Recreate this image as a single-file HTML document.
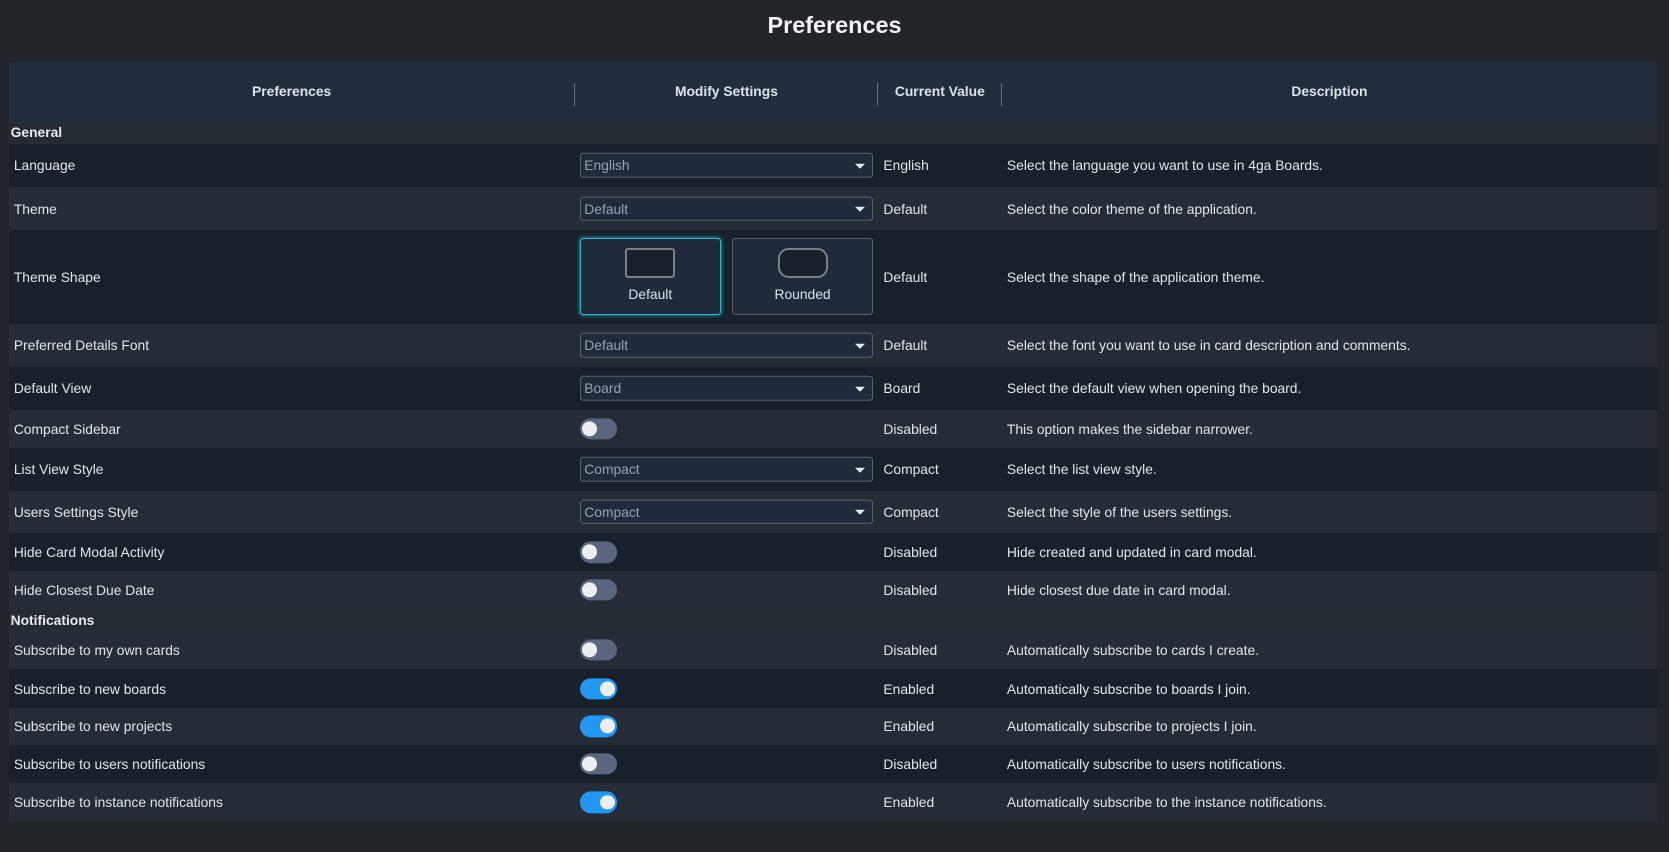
<!DOCTYPE html>
<html><head><meta charset="utf-8"><style>
*{box-sizing:border-box;margin:0;padding:0}
html,body{width:1669px;height:852px;background:#22252a;overflow:hidden}
#w{zoom:1.0644;width:1568px;height:800px;position:relative;font-family:"Liberation Sans",sans-serif;color:#e3e6ea;font-size:13px}
h1{position:absolute;top:11px;left:0;width:1568px;text-align:center;font-size:22px;font-weight:bold;color:#f2f3f5}
.t{position:absolute;left:8px;top:58px;width:1549px}
.hd{height:56px;background:#1f2d3d;position:relative;font-weight:bold;color:#dfe3e8}
.hd div{position:absolute;top:0;height:56px;line-height:56px;text-align:center}
.hd i{position:absolute;top:20px;width:1px;height:22px;background:#6a727c}
.r{position:relative;width:100%}
.d{background:#18202a}.l{background:#252c36}
.sec{height:21px;background:#252b33;font-weight:bold;line-height:21px;padding-left:2px;color:#e8eaee}
.r span{position:absolute;top:50%;transform:translateY(-50%);white-space:nowrap}
.a{left:5px}.c{left:822px}.e{left:938px}
.sel{position:absolute;left:537px;top:50%;transform:translateY(-50%);width:275px;height:23px;border:1px solid #5a616b;border-radius:3px;background:#1f2b3a;color:#9aa2ac;padding-left:3px;line-height:21px}
.sel:after{content:"";position:absolute;right:6px;top:9px;border-left:5px solid transparent;border-right:5px solid transparent;border-top:5px solid #e6e8eb}
.tg{position:absolute;left:537px;top:50%;transform:translateY(-50%);width:35px;height:20px;border-radius:10px;background:#5a6680}
.tg:after{content:"";position:absolute;left:2px;top:3px;width:14px;height:14px;border-radius:50%;background:#eceef0}
.tg.on{background:#2196f3}.tg.on:after{left:19px}
.box{position:absolute;top:8px;width:132px;height:72px;border:1px solid #5a616b;border-radius:3px;background:#1f2b3a;text-align:center}
.box b{display:block;width:47px;height:28px;margin:8px auto 0;border:2px solid #7b7e83;background:#18202a;border-radius:3px}
.box p{margin-top:8px;color:#dde0e4;font-size:13px}
</style></head><body><div id="w">
<h1>Preferences</h1>
<div class="t">
<div class="hd"><div style="left:0;width:532px">Preferences</div><i style="left:531px"></i><div style="left:532px;width:285px">Modify Settings</div><i style="left:816px"></i><div style="left:817px;width:116px">Current Value</div><i style="left:932px"></i><div style="left:933px;width:616px">Description</div></div>
<div class="r sec">General</div>
<div class="r d" style="height:41px"><span class="a">Language</span><div class="sel">English</div><span class="c">English</span><span class="e">Select the language you want to use in 4ga Boards.</span></div>
<div class="r l" style="height:40px"><span class="a">Theme</span><div class="sel">Default</div><span class="c">Default</span><span class="e">Select the color theme of the application.</span></div>
<div class="r d" style="height:88px"><span class="a">Theme Shape</span>
<div class="box" style="left:537px;border-color:#2ab8d0;box-shadow:0 0 4px #2ab8d0"><b></b><p>Default</p></div>
<div class="box" style="left:680px"><b style="border-radius:10px"></b><p>Rounded</p></div>
<span class="c">Default</span><span class="e">Select the shape of the application theme.</span></div>
<div class="r l" style="height:41px"><span class="a">Preferred Details Font</span><div class="sel">Default</div><span class="c">Default</span><span class="e">Select the font you want to use in card description and comments.</span></div>
<div class="r d" style="height:40px"><span class="a">Default View</span><div class="sel">Board</div><span class="c">Board</span><span class="e">Select the default view when opening the board.</span></div>
<div class="r l" style="height:36px"><span class="a">Compact Sidebar</span><div class="tg"></div><span class="c">Disabled</span><span class="e">This option makes the sidebar narrower.</span></div>
<div class="r d" style="height:40px"><span class="a">List View Style</span><div class="sel">Compact</div><span class="c">Compact</span><span class="e">Select the list view style.</span></div>
<div class="r l" style="height:40px"><span class="a">Users Settings Style</span><div class="sel">Compact</div><span class="c">Compact</span><span class="e">Select the style of the users settings.</span></div>
<div class="r d" style="height:36px"><span class="a">Hide Card Modal Activity</span><div class="tg"></div><span class="c">Disabled</span><span class="e">Hide created and updated in card modal.</span></div>
<div class="r l" style="height:35px"><span class="a">Hide Closest Due Date</span><div class="tg"></div><span class="c">Disabled</span><span class="e">Hide closest due date in card modal.</span></div>
<div class="r sec">Notifications</div>
<div class="r l" style="height:36px"><span class="a">Subscribe to my own cards</span><div class="tg"></div><span class="c">Disabled</span><span class="e">Automatically subscribe to cards I create.</span></div>
<div class="r d" style="height:36px"><span class="a">Subscribe to new boards</span><div class="tg on"></div><span class="c">Enabled</span><span class="e">Automatically subscribe to boards I join.</span></div>
<div class="r l" style="height:35px"><span class="a">Subscribe to new projects</span><div class="tg on"></div><span class="c">Enabled</span><span class="e">Automatically subscribe to projects I join.</span></div>
<div class="r d" style="height:36px"><span class="a">Subscribe to users notifications</span><div class="tg"></div><span class="c">Disabled</span><span class="e">Automatically subscribe to users notifications.</span></div>
<div class="r l" style="height:36px"><span class="a">Subscribe to instance notifications</span><div class="tg on"></div><span class="c">Enabled</span><span class="e">Automatically subscribe to the instance notifications.</span></div>
</div>
</div></body></html>
